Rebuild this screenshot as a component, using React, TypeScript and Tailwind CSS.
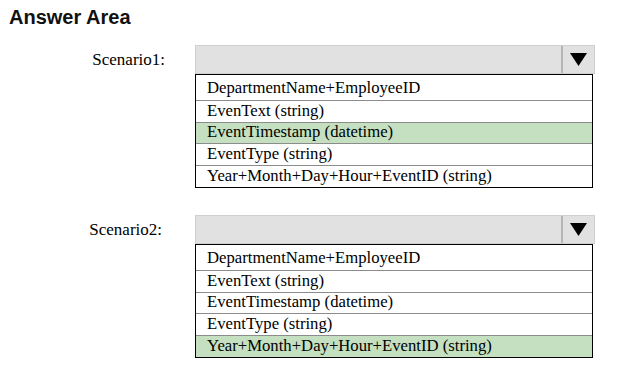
import React from 'react';

type Scenario = {
  label: string;
  selected: number;
  labelPad: string;
};

const options = [
  'DepartmentName+EmployeeID',
  'EvenText (string)',
  'EventTimestamp (datetime)',
  'EventType (string)',
  'Year+Month+Day+Hour+EventID (string)',
];

const scenarios: Scenario[] = [
  { label: 'Scenario1:', selected: 2, labelPad: 'pr-[1px]' },
  { label: 'Scenario2:', selected: 4, labelPad: 'pr-[4px]' },
];

function Dropdown({ selected }: { selected: number }) {
  return (
    <div className="w-[400px]">
      {/* closed select bar */}
      <div className="flex h-[29px] border border-[#cfcfcf] bg-[#e1e1e1]">
        <div className="flex-1" />
        <div className="flex w-[33px] items-center justify-center border-l-2 border-[#b5b5b5]">
          <svg width="17" height="13" viewBox="0 0 17 13">
            <polygon points="0,0 17,0 8.5,13" fill="#000" />
          </svg>
        </div>
      </div>
      {/* open list */}
      <div className="mr-[2px] border border-black bg-white">
        {options.map((opt, i) => (
          <div
            key={opt}
            className={`flex items-center px-[11px] text-[16.7px] leading-none text-black ${
              i === 0 ? 'h-[26px] pt-[2px]' : 'h-[21.5px]'
            } ${i < options.length - 1 ? 'border-b border-[#8c8c8c]' : ''} ${
              i === selected ? 'bg-[#c5e0c1]' : ''
            }`}
          >
            {opt}
          </div>
        ))}
      </div>
    </div>
  );
}

export default function App() {
  return (
    <div className="h-[382px] w-[617px] bg-white font-['Liberation_Serif',serif]">
      <h1 className="px-[9px] pt-[5px] font-['Liberation_Sans',Arial,sans-serif] text-[20px] font-bold leading-[24px] text-[#111]">
        Answer Area
      </h1>
      <div className="mt-[16px] flex flex-col gap-[27px]">
        {scenarios.map((s) => (
          <div key={s.label} className="flex items-start">
            <div
              className={`flex h-[29px] w-[166px] items-center justify-end text-[17px] text-black ${s.labelPad}`}
            >
              {s.label}
            </div>
            <div className="ml-[29px]">
              <Dropdown selected={s.selected} />
            </div>
          </div>
        ))}
      </div>
    </div>
  );
}
